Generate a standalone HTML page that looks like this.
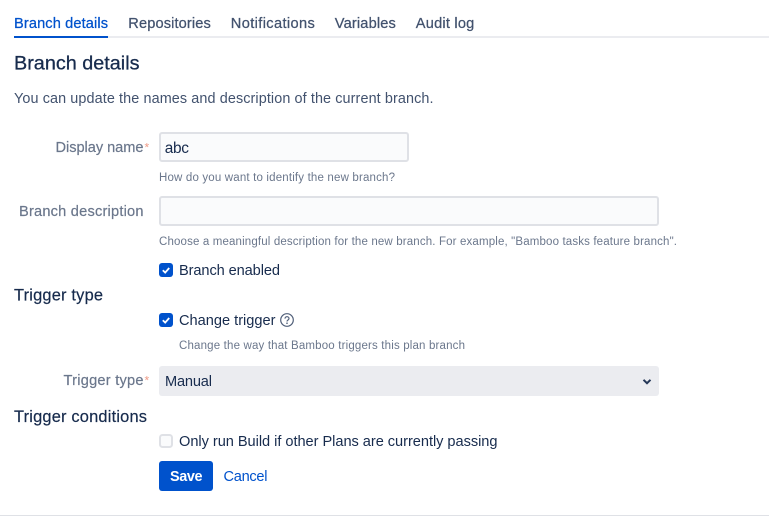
<!DOCTYPE html>
<html lang="en"><head><meta charset="utf-8"><title>Branch details</title>
<style>
html,body{margin:0;padding:0;width:769px;height:516px;overflow:hidden;background:#fff}
svg{position:absolute;left:0;top:0;display:block}
text{font-family:"Liberation Sans",sans-serif;white-space:pre}
.tab{font-size:14.6px;fill:#42526e;stroke:#42526e;stroke-width:.25}
.lab{font-size:14.6px;fill:#6b778c;stroke:#6b778c;stroke-width:.2}
.txt{font-size:14.6px;fill:#172b4d}
.hint{font-size:11.5px;fill:#6b778c}
.h3{font-size:16.4px;fill:#172b4d;stroke:#172b4d;stroke-width:.2}
.star{font-size:12px;fill:#de350b;opacity:.5}
</style></head><body>
<svg width="769" height="516" viewBox="0 0 769 516" xmlns="http://www.w3.org/2000/svg">
<rect x="14" y="36" width="755" height="2" fill="#ebecf0"/>
<rect x="14" y="36" width="94" height="2" fill="#0052cc"/>
<text x="14" y="28" class="tab" style="fill:#0052cc;stroke:#0052cc" textLength="94">Branch details</text>
<text x="128.3" y="28" class="tab" textLength="82.5">Repositories</text>
<text x="230.8" y="28" class="tab" textLength="84">Notifications</text>
<text x="334.8" y="28" class="tab" textLength="61">Variables</text>
<text x="415.8" y="28" class="tab" textLength="58.5">Audit log</text>

<text x="14" y="69.5" style="font-size:19.8px;fill:#172b4d;stroke:#172b4d;stroke-width:.3" textLength="125.5">Branch details</text>
<text x="14" y="103" style="font-size:14.4px;fill:#42526e" textLength="419.5">You can update the names and description of the current branch.</text>

<text x="55.5" y="152" class="lab" textLength="88">Display name</text>
<text x="144.5" y="151.5" class="star">*</text>
<rect x="160" y="133" width="248" height="28" rx="2" fill="#fafbfc" stroke="#dfe1e6" stroke-width="2"/>
<text x="164.8" y="153" style="font-size:15.4px;fill:#172b4d" textLength="24.2">abc</text>
<text x="159" y="181" class="hint" textLength="236">How do you want to identify the new branch?</text>

<text x="19" y="216" class="lab" textLength="124.5">Branch description</text>
<rect x="160" y="197" width="498" height="28" rx="2" fill="#fafbfc" stroke="#dfe1e6" stroke-width="2"/>
<text x="159" y="245" class="hint" textLength="518">Choose a meaningful description for the new branch. For example, "Bamboo tasks feature branch".</text>

<rect x="159" y="263" width="14" height="14" rx="3" fill="#0052cc"/>
<path d="M162.8 270.2l2.4 2.4 4-4.6" fill="none" stroke="#fff" stroke-width="1.8"/>
<text x="179" y="275" class="txt" textLength="101">Branch enabled</text>

<text x="14" y="300.5" class="h3" textLength="89">Trigger type</text>

<rect x="159" y="313" width="14" height="14" rx="3" fill="#0052cc"/>
<path d="M162.8 320.2l2.4 2.4 4-4.6" fill="none" stroke="#fff" stroke-width="1.8"/>
<text x="179" y="325" class="txt" textLength="96.5">Change trigger</text>
<circle cx="287" cy="320" r="6.3" fill="none" stroke="#505f79" stroke-width="1.2"/>
<path d="M285 318.6c0-1.2 1-1.9 2-1.9s2 .7 2 1.8c0 1.5-2 1.5-2 3" fill="none" stroke="#505f79" stroke-width="1.2"/>
<circle cx="287" cy="323.2" r=".8" fill="#505f79"/>
<text x="179" y="349" class="hint" textLength="286">Change the way that Bamboo triggers this plan branch</text>

<text x="63.5" y="385" class="lab" textLength="80">Trigger type</text>
<text x="144.5" y="384.5" class="star">*</text>
<rect x="159" y="366" width="500" height="30" rx="3" fill="#ebecf0"/>
<text x="165" y="386" class="txt" textLength="47">Manual</text>
<path d="M643.5 379.8l3.5 3.4 3.5-3.4" fill="none" stroke="#253858" stroke-width="2"/>

<text x="14" y="422" class="h3" textLength="133">Trigger conditions</text>

<rect x="160" y="435" width="12" height="12" rx="2.5" fill="#fafbfc" stroke="#dfe1e6" stroke-width="2"/>
<text x="179" y="446" class="txt" textLength="318.5">Only run Build if other Plans are currently passing</text>

<rect x="159" y="461" width="54" height="30" rx="3" fill="#0052cc"/>
<text x="170" y="481" style="font-size:14.4px;font-weight:700;fill:#fff" textLength="32.5">Save</text>
<text x="223.5" y="481" style="font-size:14.6px;fill:#0052cc" textLength="44">Cancel</text>

<rect x="0" y="515" width="769" height="1" fill="#dfe1e6"/>
</svg>
</body></html>
